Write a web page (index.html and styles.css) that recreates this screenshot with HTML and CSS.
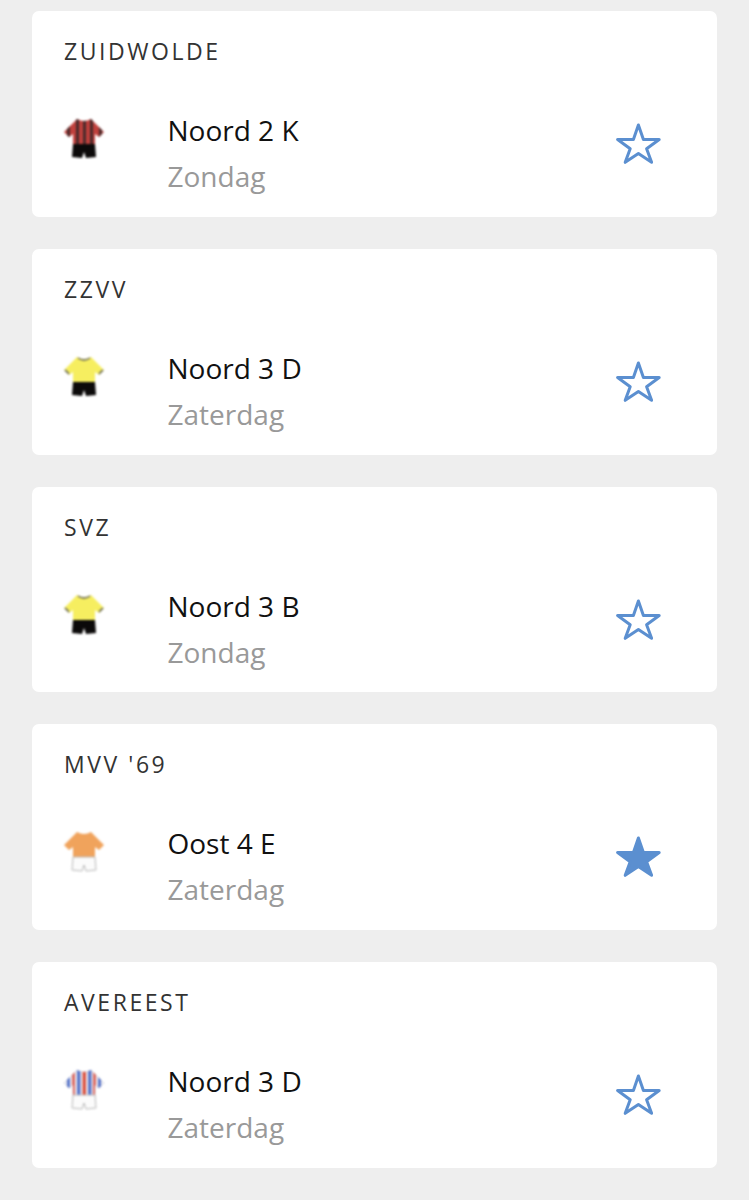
FILE: index.html
```html
<!DOCTYPE html>
<html lang="en">
<head>
  <meta charset="UTF-8" />
  <meta name="viewport" content="width=device-width, initial-scale=1" />
  <title>Favoriete teams</title>
  <link rel="stylesheet" href="styles.css">
</head>
<body>
  <svg class="defs" width="0" height="0" aria-hidden="true">
    <defs>
      <clipPath id="shirtClip">
        <path d="M13 0 Q20 4 27 0 L40 13 L35 18 L31 15 L31 26 L9 26 L9 15 L5 18 L0 13 Z" />
      </clipPath>
      <path id="shirtShape" d="M13 0 Q20 4 27 0 L40 13 L35 18 L31 15 L31 26 L9 26 L9 15 L5 18 L0 13 Z" />
      <path id="shortsShape" d="M9 25 L31 25 L32 38 L22 39 L20 33 L18 39 L8 38 Z" />
      <path id="starShape" d="M23.400 3 L28.400 17.500 L44.200 17.500 L31.600 26.800 L36.600 40.300 L23.400 31.500 L10.200 40.300 L15.200 26.800 L2.600 17.500 L18.400 17.500 Z" />
    </defs>
  </svg>

  <section class="card">
    <h2 class="club">ZUIDWOLDE</h2>
    <div class="team">
      <svg class="shirt" viewBox="0 0 40 40">
        <use href="#shirtShape" fill="#c0403c" />
        <g clip-path="url(#shirtClip)" fill="#4a2a2b">
          <rect x="3" width="3" height="26" />
          <rect x="12" width="3" height="26" />
          <rect x="19" width="3" height="26" />
          <rect x="26" width="3" height="26" />
          <rect x="35" width="3" height="26" />
        </g>
        <use href="#shortsShape" fill="#0c0a0a" />
      </svg>
      <div class="info">
        <div class="league">Noord 2 K</div>
        <div class="day">Zondag</div>
      </div>
      <svg class="star star-open" viewBox="0 0 46 44"><use href="#starShape" /></svg>
    </div>
  </section>

  <section class="card">
    <h2 class="club">ZZVV</h2>
    <div class="team">
      <svg class="shirt" viewBox="0 0 40 40">
        <use href="#shirtShape" fill="#f6ee60" />
        <use href="#shortsShape" fill="#0c0a0a" />
        <path class="cuffs" d="M1 13 L5 17 M39 13 L35 17 M14 1 Q20 5 26 1" />
      </svg>
      <div class="info">
        <div class="league">Noord 3 D</div>
        <div class="day">Zaterdag</div>
      </div>
      <svg class="star star-open" viewBox="0 0 46 44"><use href="#starShape" /></svg>
    </div>
  </section>

  <section class="card">
    <h2 class="club">SVZ</h2>
    <div class="team">
      <svg class="shirt" viewBox="0 0 40 40">
        <use href="#shirtShape" fill="#f6ee60" />
        <use href="#shortsShape" fill="#0c0a0a" />
        <path class="cuffs" d="M1 13 L5 17 M39 13 L35 17 M14 1 Q20 5 26 1" />
      </svg>
      <div class="info">
        <div class="league">Noord 3 B</div>
        <div class="day">Zondag</div>
      </div>
      <svg class="star star-open" viewBox="0 0 46 44"><use href="#starShape" /></svg>
    </div>
  </section>

  <section class="card">
    <h2 class="club">MVV '69</h2>
    <div class="team">
      <svg class="shirt" viewBox="0 0 40 40">
        <use href="#shirtShape" fill="#f0a35c" />
        <use href="#shortsShape" fill="#fbfbfb" stroke="#b8b8b8" />
      </svg>
      <div class="info">
        <div class="league">Oost 4 E</div>
        <div class="day">Zaterdag</div>
      </div>
      <svg class="star star-full" viewBox="0 0 46 44"><use href="#starShape" /></svg>
    </div>
  </section>

  <section class="card">
    <h2 class="club">AVEREEST</h2>
    <div class="team">
      <svg class="shirt" viewBox="0 0 40 40">
        <use href="#shirtShape" fill="#f4f4f8" stroke="#d8d8e0" />
        <g clip-path="url(#shirtClip)">
          <rect x="3" width="3" height="26" fill="#5572c8" />
          <rect x="8" width="3" height="26" fill="#d9675f" />
          <rect x="13" width="3.500" height="26" fill="#5572c8" />
          <rect x="18.500" width="3.500" height="26" fill="#d9503f" />
          <rect x="24" width="3.500" height="26" fill="#5572c8" />
          <rect x="29" width="3" height="26" fill="#d9675f" />
          <rect x="34" width="3" height="26" fill="#5572c8" />
        </g>
        <use href="#shortsShape" fill="#fbfbfb" stroke="#b8b8b8" />
      </svg>
      <div class="info">
        <div class="league">Noord 3 D</div>
        <div class="day">Zaterdag</div>
      </div>
      <svg class="star star-open" viewBox="0 0 46 44"><use href="#starShape" /></svg>
    </div>
  </section>
</body>
</html>
```

FILE: styles.css
```css
body {
  margin: 0;
  padding: 11px 32px 32px;
  background: #eeeeee;
  font-family: "Open Sans", Arial, sans-serif;
  display: flex;
  flex-direction: column;
  gap: 32px;
}
.defs {
  position: absolute;
}
.card {
  background: #fff;
  border-radius: 7px;
  height: 205.75px;
  box-sizing: border-box;
  padding: 24px 32px 0;
}
.club {
  margin: 0;
  font-size: 23px;
  line-height: 32px;
  font-weight: 400;
  letter-spacing: 2.55px;
  color: #333;
}
.team {
  display: flex;
  align-items: flex-start;
  margin-top: 40px;
}
.shirt {
  width: 40px;
  height: 40px;
  margin-top: 12px;
  margin-right: 63.5px;
  flex-shrink: 0;
  filter: blur(1px);
}
.cuffs {
  fill: none;
  stroke: #555;
  stroke-width: 1.5;
}
.info {
  flex: 1;
}
.league {
  font-size: 28px;
  line-height: 46px;
  color: #111;
}
.day {
  font-size: 28px;
  line-height: 46px;
  color: #999;
}
.star {
  width: 46px;
  height: 44px;
  margin-top: 15px;
  margin-right: 24px;
  stroke: #5b8fd0;
  stroke-width: 3;
  stroke-linejoin: round;
}
.star-open {
  fill: none;
}
.star-full {
  fill: #5b8fd0;
}
```
